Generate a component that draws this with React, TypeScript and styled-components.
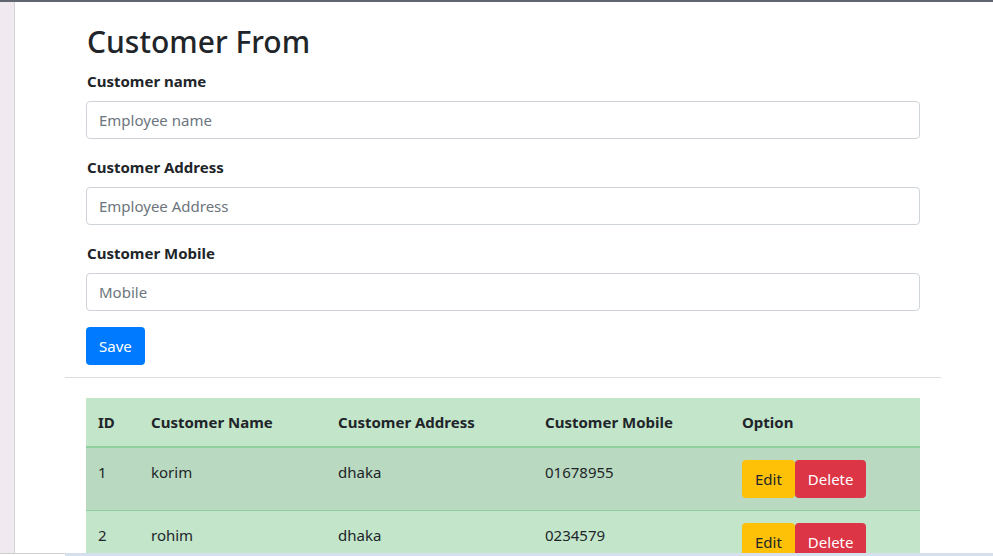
import React from "react";
import styled, { createGlobalStyle } from "styled-components";

const Global = createGlobalStyle`
  html, body { margin: 0; padding: 0; background: #fff; }
  body {
    font-family: "Noto Sans", "Open Sans", sans-serif;
    font-size: 15px;
    line-height: 24px;
    color: #212529;
    overflow: hidden;
  }
  * { box-sizing: border-box; }
`;

const Frame = styled.div`
  width: 993px;
  height: 556px;
  display: flex;
  flex-direction: column;
  overflow: hidden;
  position: relative;
`;

const TopBar = styled.div`
  height: 2px;
  flex: none;
  background: #5f666f;
`;

const Body = styled.div`
  flex: 1;
  display: flex;
  min-height: 0;
`;

const SideStrip = styled.div`
  width: 15px;
  flex: none;
  background: #f0eaf0;
  border-right: 1px solid #d6d3d6;
`;

const Main = styled.div`
  flex: 1;
  display: flex;
  padding-left: 50px;
  overflow: hidden;
`;

const Container = styled.div`
  width: 876px;
  flex: none;
  padding-top: 21px;
`;

const Inner = styled.div`
  padding: 0 21px;
`;

const Title = styled.h2`
  margin: 0 0 8px 1px;
  font-size: 30px;
  font-weight: 500;
  line-height: 38px;
`;

const Group = styled.div`
  margin-bottom: 16px;
`;

const Label = styled.label`
  display: block;
  font-weight: 700;
  font-size: 15px;
  line-height: 24px;
  margin: 0 0 8px 1px;
`;

const Input = styled.input`
  display: block;
  width: 100%;
  height: 38px;
  padding: 6px 12px;
  font: inherit;
  font-size: 15px;
  line-height: 24px;
  color: #495057;
  background: #fff;
  border: 1px solid #ced4da;
  border-radius: 4px;
  &::placeholder { color: #6c757d; }
`;

const Button = styled.button<{ $variant: "primary" | "warning" | "danger" }>`
  display: inline-block;
  height: 38px;
  padding: 6px 12px;
  font: inherit;
  font-size: 15px;
  line-height: 24px;
  border: 1px solid transparent;
  border-radius: 4px;
  cursor: pointer;
  vertical-align: middle;
  background: ${(p) =>
    p.$variant === "primary" ? "#007bff" : p.$variant === "warning" ? "#ffc107" : "#dc3545"};
  color: ${(p) => (p.$variant === "warning" ? "#212529" : "#fff")};
`;

const Rule = styled.hr`
  margin: 12px 0 20px;
  border: 0;
  border-top: 1px solid #dedede;
`;

const Table = styled.table`
  width: 100%;
  border-collapse: collapse;
  background: #c3e6cb;
  font-size: 15px;
  line-height: 24px;
`;

const Th = styled.th<{ $w: number }>`
  width: ${(p) => p.$w}px;
  text-align: left;
  padding: 12px;
  font-weight: 700;
  vertical-align: bottom;
  border-bottom: 2px solid #8fd19e;
`;

const Tr = styled.tr<{ $odd: boolean }>`
  background: ${(p) => (p.$odd ? "rgba(0,0,0,0.05)" : "transparent")};
`;

const Td = styled.td`
  padding: 12px;
  vertical-align: top;
  border-top: 1px solid #8fd19e;
`;

const BottomStrip = styled.div`
  position: absolute;
  left: 0;
  right: 0;
  bottom: 0;
  height: 3px;
  display: flex;
`;

const BottomLeft = styled.div`
  width: 65px;
  background: #fff;
  border-top: 1px solid #cfcfcf;
`;

const BottomRight = styled.div`
  flex: 1;
  background: #d6e0ec;
`;

const rows = [
  { id: 1, name: "korim", address: "dhaka", mobile: "01678955" },
  { id: 2, name: "rohim", address: "dhaka", mobile: "0234579" },
];

export default function App() {
  return (
    <>
      <Global />
      <Frame>
        <TopBar />
        <Body>
          <SideStrip />
          <Main>
            <Container>
              <Inner>
                <Title>Customer From</Title>
                <Group>
                  <Label>Customer name</Label>
                  <Input placeholder="Employee name" />
                </Group>
                <Group>
                  <Label>Customer Address</Label>
                  <Input placeholder="Employee Address" />
                </Group>
                <Group>
                  <Label>Customer Mobile</Label>
                  <Input placeholder="Mobile" />
                </Group>
                <Button $variant="primary">Save</Button>
              </Inner>
              <Rule />
              <Inner>
                <Table>
                  <thead>
                    <tr>
                      <Th $w={53}>ID</Th>
                      <Th $w={187}>Customer Name</Th>
                      <Th $w={207}>Customer Address</Th>
                      <Th $w={197}>Customer Mobile</Th>
                      <Th $w={190}>Option</Th>
                    </tr>
                  </thead>
                  <tbody>
                    {rows.map((r, i) => (
                      <Tr key={r.id} $odd={i % 2 === 0}>
                        <Td>{r.id}</Td>
                        <Td>{r.name}</Td>
                        <Td>{r.address}</Td>
                        <Td>{r.mobile}</Td>
                        <Td>
                          <Button $variant="warning">Edit</Button>
                          <Button $variant="danger">Delete</Button>
                        </Td>
                      </Tr>
                    ))}
                  </tbody>
                </Table>
              </Inner>
            </Container>
          </Main>
        </Body>
        <BottomStrip>
          <BottomLeft />
          <BottomRight />
        </BottomStrip>
      </Frame>
    </>
  );
}
